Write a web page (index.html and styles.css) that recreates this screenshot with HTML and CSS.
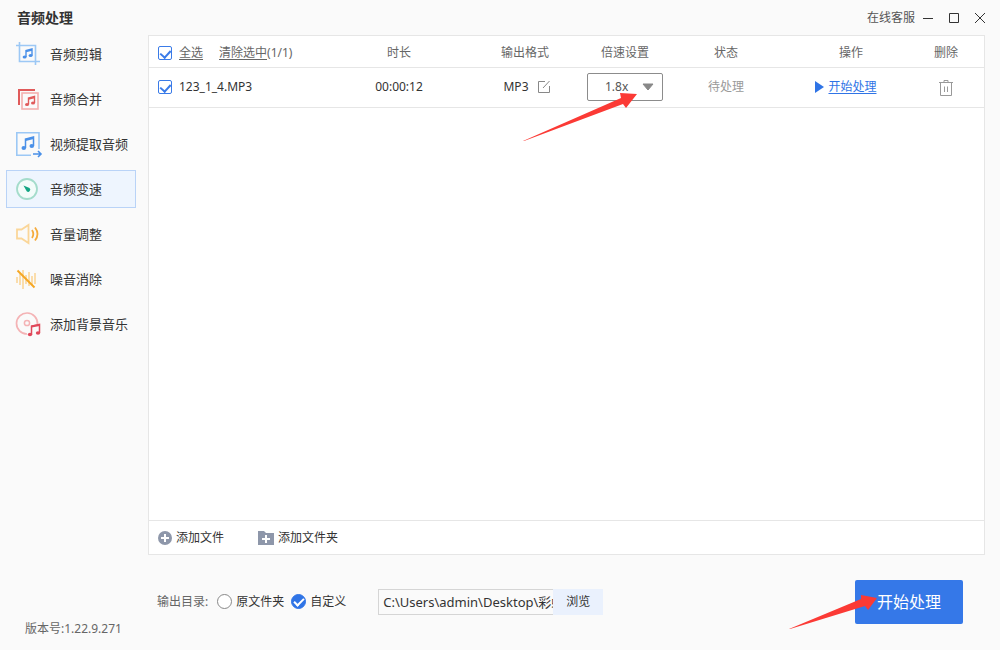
FILE: index.html
```html
<!DOCTYPE html>
<html lang="zh-CN">
<head>
    <meta charset="UTF-8">
    <meta name="viewport" content="width=device-width, initial-scale=1.0">
    <title>音频处理</title>
    <link rel="stylesheet" href="styles.css">
</head>
<body>
    <header class="titlebar">
        <h1 class="title">音频处理</h1>
        <a class="service" href="#">在线客服</a>
        <button class="win-btn" type="button" aria-label="最小化">
            <svg width="12" height="12" viewBox="0 0 12 12"><path d="M1 6.5h10" /></svg>
        </button>
        <button class="win-btn" type="button" aria-label="最大化">
            <svg width="12" height="12" viewBox="0 0 12 12"><path d="M1.5 1.5h9v9h-9z" /></svg>
        </button>
        <button class="win-btn" type="button" aria-label="关闭">
            <svg width="12" height="12" viewBox="0 0 12 12"><path d="M1 1l10 10M11 1L1 11" /></svg>
        </button>
    </header>

    <div class="layout">
        <aside class="sidebar">
            <nav class="menu">
                <a class="menu-item" href="#">
                    <svg class="menu-icon" viewBox="0 0 24 24" fill="none">
                        <path d="M0 3.5h19.5V23M3.5 0v19.5H24" stroke="#9cc8f5" stroke-width="1.6" />
                        <path d="M10 15V8.5l6-1.5v6.5" stroke="#4a90e8" stroke-width="1.4" />
                        <path d="M10 9.5l6-1.5" stroke="#4a90e8" stroke-width="1.6" />
                        <ellipse cx="8.6" cy="15" rx="2" ry="1.6" fill="#4a90e8" />
                        <ellipse cx="14.6" cy="13.5" rx="2" ry="1.6" fill="#4a90e8" />
                    </svg>
                    音频剪辑
                </a>
                <a class="menu-item" href="#">
                    <svg class="menu-icon" viewBox="0 0 24 24" fill="none">
                        <path d="M3 18V3h16" stroke="#e05a5a" stroke-width="2" />
                        <rect x="6" y="6" width="16" height="16" stroke="#f4b0ae" stroke-width="1.6" />
                        <path d="M12.5 17.5V11l6-1.5V16" stroke="#e05a5a" stroke-width="1.4" />
                        <path d="M12.5 12l6-1.5" stroke="#e05a5a" stroke-width="1.6" />
                        <ellipse cx="11" cy="17.5" rx="2" ry="1.6" fill="#e05a5a" />
                        <ellipse cx="17" cy="16" rx="2" ry="1.6" fill="#e05a5a" />
                    </svg>
                    音频合并
                </a>
                <a class="menu-item" href="#">
                    <svg class="menu-icon" viewBox="0 0 24 24" fill="none">
                        <path d="M23 17V.8H.8v22.4H15" stroke="#9cc8f5" stroke-width="1.6" />
                        <path d="M9.5 16V7l8-2v9" stroke="#4a90e8" stroke-width="1.5" />
                        <path d="M9.5 8l8-2" stroke="#4a90e8" stroke-width="2" />
                        <ellipse cx="7.8" cy="16" rx="2.3" ry="1.9" fill="#4a90e8" />
                        <ellipse cx="15.8" cy="14" rx="2.3" ry="1.9" fill="#4a90e8" />
                        <path d="M17 22h7M22 19l3 3-3 3" stroke="#4a90e8" stroke-width="1.6" />
                    </svg>
                    视频提取音频
                </a>
                <a class="menu-item active" href="#" aria-current="page">
                    <svg class="menu-icon" viewBox="0 0 24 24" fill="none">
                        <circle cx="11" cy="12" r="10" fill="#f3fcfa" stroke="#a4dccb" stroke-width="1.8" />
                        <path d="M7.5 8.5l6 2.6a2 2 0 1 1-2.8 3.2z" fill="#12a583" />
                    </svg>
                    音频变速
                </a>
                <a class="menu-item" href="#">
                    <svg class="menu-icon" viewBox="0 0 24 24" fill="none">
                        <path d="M1 7.5h4.5L12.5 3v18l-7-4.5H1z" stroke="#fad699" stroke-width="1.8" />
                        <path d="M16 8q2.6 4 0 8M19 5.5q5 6.5 0 13" stroke="#f5ab3d" stroke-width="1.8" />
                    </svg>
                    音量调整
                </a>
                <a class="menu-item" href="#">
                    <svg class="menu-icon" viewBox="0 0 24 24" fill="none">
                        <path d="M1 10v6M4 7v11M7 3v19M10 8v9M13 5v14M16 9v9M19 6v11" stroke="#fad699" stroke-width="1.6" />
                        <path d="M1.5 3.5l17 17" stroke="#f5a623" stroke-width="2" />
                    </svg>
                    噪音消除
                </a>
                <a class="menu-item" href="#">
                    <svg class="menu-icon" viewBox="0 0 24 24" fill="none">
                        <path d="M11 22A10.5 10.5 0 1 1 21.5 12" stroke="#f4b3b5" stroke-width="1.7" />
                        <circle cx="11" cy="11" r="2.6" stroke="#f4b3b5" stroke-width="1.5" />
                        <path d="M15.5 22.5V14l8-1.5V21" stroke="#e0485a" stroke-width="1.5" />
                        <path d="M15.5 14.5l8-1.5" stroke="#e0485a" stroke-width="2" />
                        <ellipse cx="14" cy="22.5" rx="2.2" ry="1.8" fill="#e0485a" />
                        <ellipse cx="22" cy="21" rx="2.2" ry="1.8" fill="#e0485a" />
                    </svg>
                    添加背景音乐
                </a>
            </nav>
            <p class="version">版本号:1.22.9.271</p>
        </aside>

        <main class="content">
            <section class="panel">
                <table class="file-table">
                    <colgroup>
                        <col>
                        <col class="col-duration">
                        <col class="col-format">
                        <col class="col-speed">
                        <col class="col-status">
                        <col class="col-action">
                        <col class="col-delete">
                    </colgroup>
                    <thead>
                        <tr>
                            <th class="name-cell">
                                <div class="file-name">
                                    <input class="check" type="checkbox" id="checkAll" checked>
                                    <label class="check-all" for="checkAll">全选</label>
                                    <span><a class="clear" href="#">清除选中</a>(1/1)</span>
                                </div>
                            </th>
                            <th>时长</th>
                            <th>输出格式</th>
                            <th>倍速设置</th>
                            <th>状态</th>
                            <th>操作</th>
                            <th class="delete-cell">删除</th>
                        </tr>
                    </thead>
                    <tbody>
                        <tr>
                            <td class="name-cell">
                                <div class="file-name">
                                    <input class="check" type="checkbox" id="file1" checked>
                                    <label for="file1">123_1_4.MP3</label>
                                </div>
                            </td>
                            <td>00:00:12</td>
                            <td>
                                <div class="format">
                                    MP3
                                    <button class="icon-btn" type="button" aria-label="修改输出格式">
                                        <svg width="14" height="14" viewBox="0 0 14 14" fill="none" stroke="#888">
                                            <path d="M8 1.5H1.5v11h11V6M6 8l6.5-7" />
                                        </svg>
                                    </button>
                                </div>
                            </td>
                            <td>
                                <div class="speed">
                                    <select class="speed-select" aria-label="倍速设置">
                                        <option>1.0x</option>
                                        <option>1.5x</option>
                                        <option selected>1.8x</option>
                                        <option>2.0x</option>
                                    </select>
                                    <svg class="caret" width="12" height="8" viewBox="0 0 12 8"><path d="M1 1h10L6 7z" fill="#888" stroke="#888" stroke-linejoin="round" /></svg>
                                    <svg class="arrow arrow-speed" width="114" height="49" viewBox="0 0 114 49"><path d="M0 48L98 5 97 0l17 1-11 14-3-4L1 48z" fill="#fb3a35" /></svg>
                                </div>
                            </td>
                            <td class="status">待处理</td>
                            <td>
                                <a class="start-link" href="#">
                                    <svg width="9" height="12" viewBox="0 0 9 12"><path d="M0 0l9 6-9 6z" fill="#2f74e6" /></svg>
                                    <span>开始处理</span>
                                </a>
                            </td>
                            <td class="delete-cell">
                                <button class="icon-btn" type="button" aria-label="删除">
                                    <svg width="16" height="16" viewBox="0 0 16 16" fill="none" stroke="#999">
                                        <path d="M1 2.5h14M6 2.5v-2h4v2M2.5 3v12.5h11V3M6.5 6.5V12M9.5 6.5V12" />
                                    </svg>
                                </button>
                            </td>
                        </tr>
                    </tbody>
                </table>
                <div class="add-bar">
                    <button class="add-btn" type="button">
                        <svg width="14" height="14" viewBox="0 0 14 14"><circle cx="7" cy="7" r="7" fill="#8e97aa" /><path d="M7 3v8M3 7h8" stroke="#fff" stroke-width="2" /></svg>
                        添加文件
                    </button>
                    <button class="add-btn" type="button">
                        <svg width="16" height="14" viewBox="0 0 16 14"><path d="M0 0h6l2 2h8v12H0z" fill="#8e97aa" /><path d="M8 4v8M4 8h8" stroke="#fff" stroke-width="2" /></svg>
                        添加文件夹
                    </button>
                </div>
            </section>

            <form class="output">
                <span class="output-label">输出目录:</span>
                <label class="choice"><input class="radio" type="radio" name="dir">原文件夹</label>
                <label class="choice"><input class="radio" type="radio" name="dir" checked>自定义</label>
                <div class="path">
                    <input class="path-input" type="text" aria-label="输出目录" value="C:\Users\admin\Desktop\彩虹办公">
                    <button class="browse" type="button">浏览</button>
                </div>
                <button class="start-btn" type="button">
                    开始处理
                    <svg class="arrow arrow-start" width="88" height="35" viewBox="0 0 88 35"><path d="M0 34L72 4V0l16 3-9 12-3-4L1 34z" fill="#fb3a35" /></svg>
                </button>
            </form>
        </main>
    </div>
</body>
</html>
```
FILE: styles.css
```css
* {
    box-sizing: border-box;
}

body {
    display: flex;
    flex-direction: column;
    min-height: 100vh;
    margin: 0;
    background: #fafafa;
    color: #333;
    font-family: "Noto Sans", "Noto Sans CJK SC", sans-serif;
    font-size: 12px;
    line-height: 18px;
}

button,
input,
select {
    font: inherit;
    color: inherit;
}

button {
    padding: 0;
    border: none;
    background: none;
    cursor: pointer;
}

a {
    color: inherit;
    text-decoration: none;
}

svg {
    flex: none;
    overflow: visible;
}

/* title bar */
.titlebar {
    display: flex;
    align-items: center;
    height: 35px;
    padding: 0 7px 0 17px;
}

.title {
    margin: 0 auto 0 0;
    font-size: 14px;
    font-weight: bold;
}

.service {
    color: #555;
}

.win-btn {
    display: flex;
    align-items: center;
    justify-content: center;
    width: 26px;
    height: 25px;
}

.win-btn svg {
    fill: none;
    stroke: #333;
}

.layout {
    display: grid;
    grid-template-columns: 148px 1fr;
    flex: 1;
}

/* sidebar */
.sidebar {
    display: flex;
    flex-direction: column;
    justify-content: space-between;
}

.menu {
    display: flex;
    flex-direction: column;
    gap: 7px;
    padding: 0 12px 0 6px;
}

.menu-item {
    display: flex;
    align-items: center;
    gap: 10px;
    height: 38px;
    padding-left: 9px;
    border: 1px solid transparent;
    font-size: 13px;
}

.menu-item.active {
    border-color: #b9d3f7;
    background: #eef5fe;
}

.menu-icon {
    width: 24px;
    height: 24px;
}

.version {
    margin: 0;
    padding: 0 0 12px 25px;
    color: #666;
}

/* file list */
.content {
    display: flex;
    flex-direction: column;
    min-width: 0;
    padding-right: 15px;
}

.panel {
    display: flex;
    flex: 1;
    flex-direction: column;
    justify-content: space-between;
    border: 1px solid #e6e6e6;
    background: #fff;
}

.file-table {
    width: 100%;
    border-collapse: collapse;
    table-layout: fixed;
}

.col-duration {
    width: 142px;
}

.col-format {
    width: 110px;
}

.col-speed {
    width: 90px;
}

.col-status {
    width: 112px;
}

.col-action {
    width: 138px;
}

.col-delete {
    width: 64px;
}

th,
td {
    padding: 0;
    border-bottom: 1px solid #e6e6e6;
    text-align: center;
}

th {
    height: 31px;
    padding-top: 3px;
    color: #666;
    font-weight: normal;
}

td {
    height: 40px;
}

th.delete-cell,
td.delete-cell {
    padding-right: 12px;
}

.name-cell {
    padding-left: 9px;
}

.file-name {
    display: flex;
    align-items: center;
    gap: 7px;
    white-space: nowrap;
}

.check {
    flex: none;
    width: 14px;
    height: 14px;
    margin: 0;
    border: 1px solid #3a7be8;
    border-radius: 2px;
    appearance: none;
}

.check:checked::before {
    content: "";
    display: block;
    width: 5px;
    height: 8px;
    margin: 1px auto 0;
    border: solid #3a7be8;
    border-width: 0 2px 2px 0;
    transform: rotate(42deg);
}

.check-all {
    margin-right: 9px;
}

.check-all,
.clear,
.start-link span {
    text-decoration: underline;
    text-underline-offset: 2px;
}

.format,
.start-link {
    display: flex;
    align-items: center;
    justify-content: center;
}

.format {
    gap: 8px;
    padding-left: 4px;
}

.start-link {
    gap: 4px;
    padding-right: 10px;
    color: #2f74e6;
}

.icon-btn {
    display: inline-flex;
    vertical-align: middle;
}

.speed {
    position: relative;
    width: 76px;
    margin: 0 auto;
}

.speed-select {
    display: block;
    width: 100%;
    height: 28px;
    padding: 0 17px;
    border: 1px solid #8c8c8c;
    border-radius: 2px;
    background: #fff;
    color: #555;
    appearance: none;
}

.caret {
    position: absolute;
    top: 10px;
    right: 9px;
    pointer-events: none;
}

/* red pointers drawn over the controls */
.arrow {
    position: absolute;
    z-index: 1;
    pointer-events: none;
}

.arrow-speed {
    top: 20px;
    right: 26px;
}

.arrow-start {
    top: 15px;
    right: 86px;
}

.status {
    color: #999;
}

.add-bar {
    display: flex;
    align-items: center;
    gap: 34px;
    height: 34px;
    padding-left: 9px;
    border-top: 1px solid #e6e6e6;
}

.add-btn {
    display: flex;
    align-items: center;
    gap: 4px;
}

/* output folder */
.output {
    display: flex;
    align-items: center;
    height: 95px;
    padding: 0 22px 2px 9px;
}

.output-label {
    margin-right: 9px;
    color: #666;
}

.choice {
    display: flex;
    align-items: center;
    gap: 4px;
    margin-right: 7px;
    white-space: nowrap;
}

.radio {
    width: 15px;
    height: 15px;
    margin: 0;
    border: 1px solid #888;
    border-radius: 50%;
    background: #fff;
    appearance: none;
}

.radio:checked {
    border-color: #2f74e6;
    background: #2f74e6;
}

.radio:checked::before {
    content: "";
    display: block;
    width: 8px;
    height: 4px;
    margin: 3px auto 0;
    border: solid #fff;
    border-width: 0 0 2px 2px;
    transform: rotate(-45deg);
}

.path {
    display: flex;
    height: 26px;
    margin-left: 25px;
}

.path-input {
    width: 175px;
    padding: 0 0 0 4px;
    border: 1px solid #d5d5d5;
    border-right: none;
    background: #fafafa;
    font-size: 13px;
}

.browse {
    width: 50px;
    background: #eaf1fd;
}

.start-btn {
    position: relative;
    width: 108px;
    height: 44px;
    margin-left: auto;
    border-radius: 2px;
    background: #3578e8;
    color: #fff;
    font-size: 16px;
}
```
